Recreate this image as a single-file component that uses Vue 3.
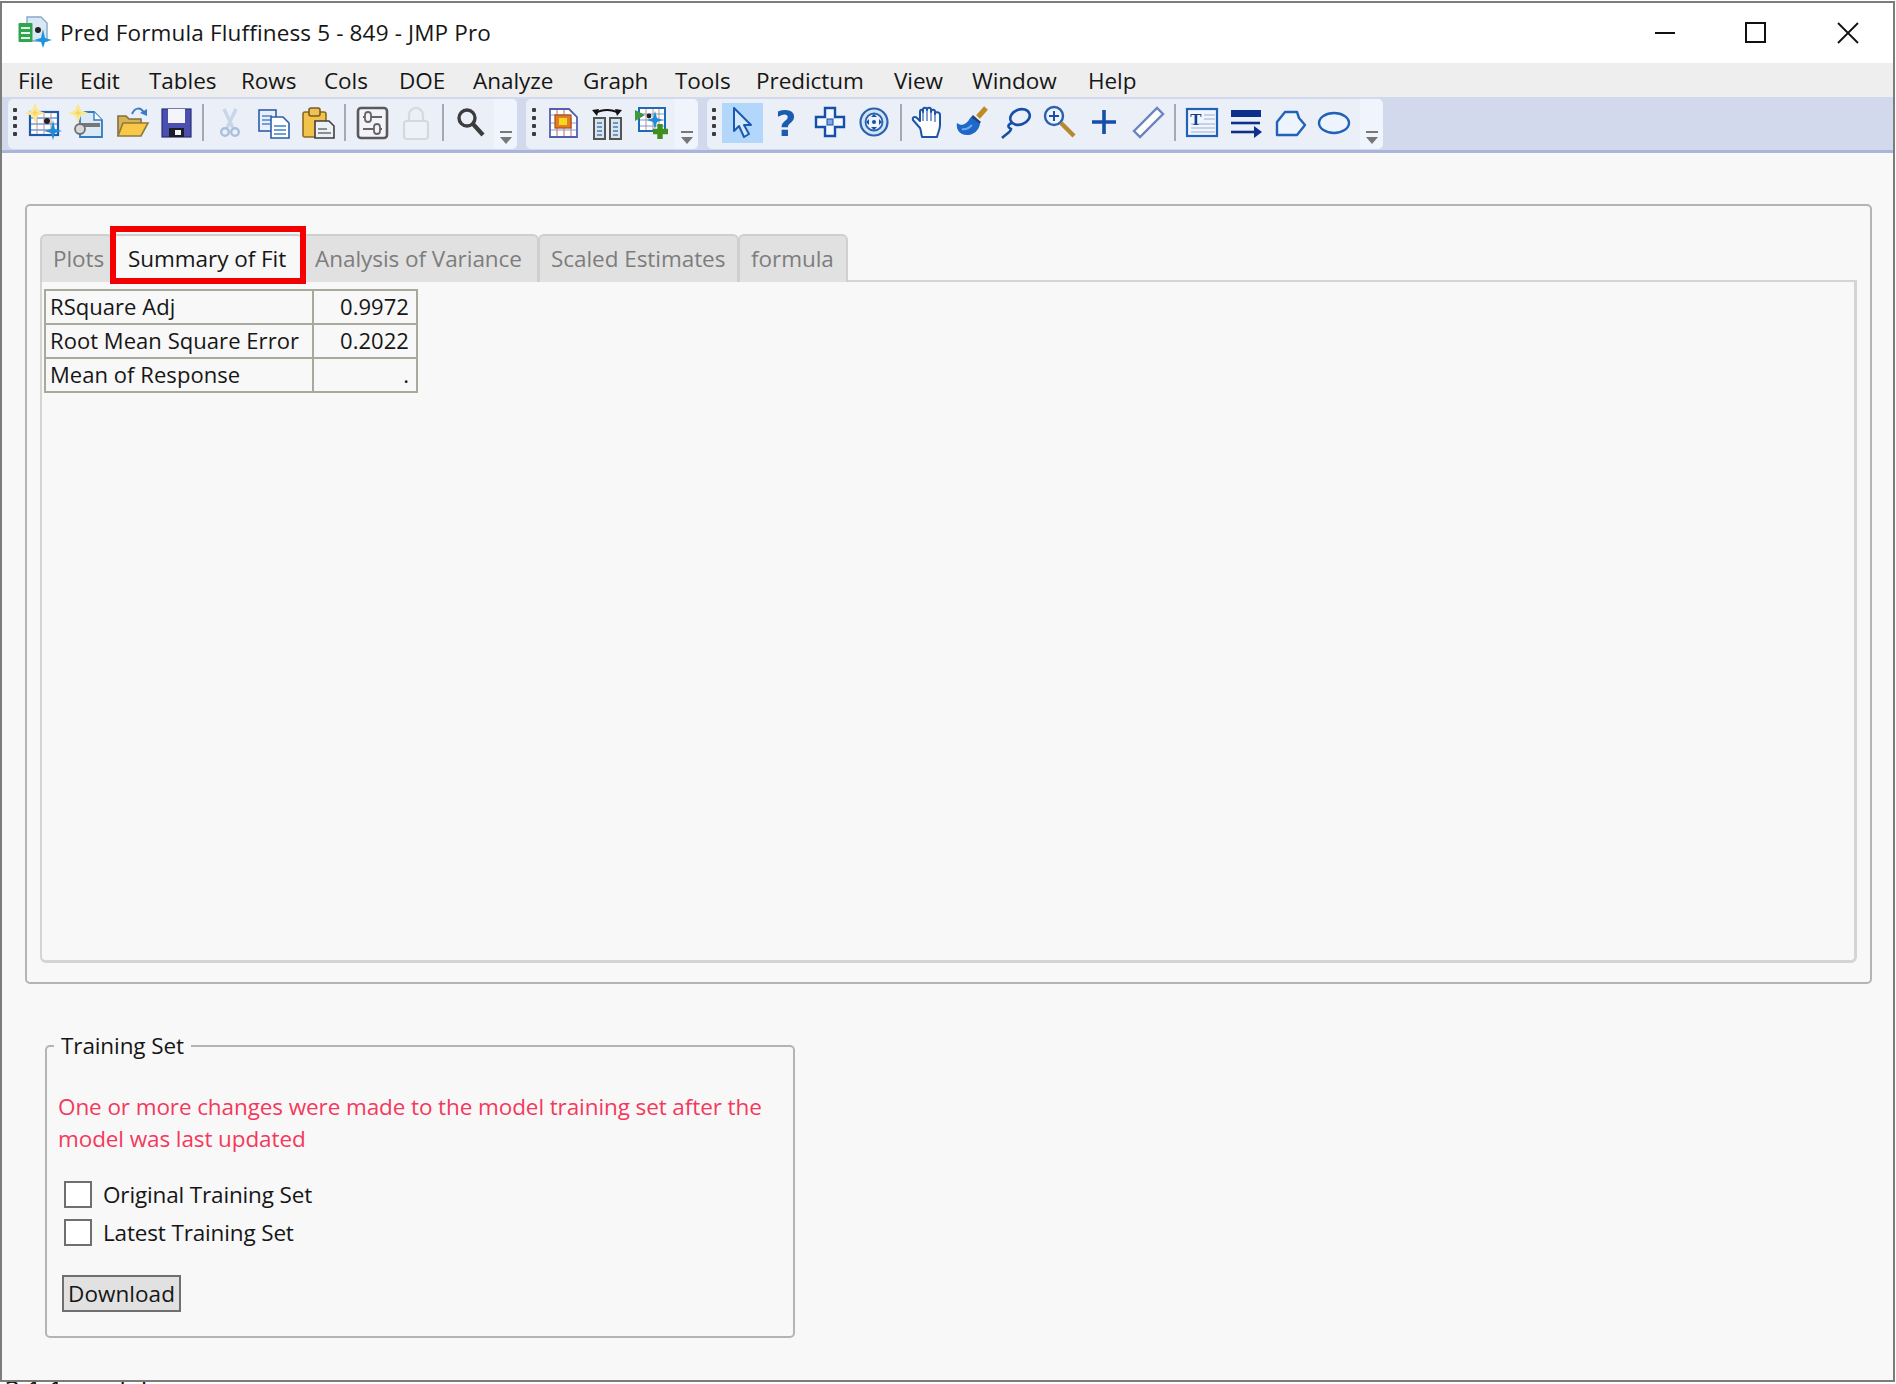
<script setup>
const menus = ['File', 'Edit', 'Tables', 'Rows', 'Cols', 'DOE', 'Analyze', 'Graph', 'Tools', 'Predictum', 'View', 'Window', 'Help']
const tabs = [
  { name: 'Plots', on: false },
  { name: 'Summary of Fit', on: true },
  { name: 'Analysis of Variance', on: false },
  { name: 'Scaled Estimates', on: false },
  { name: 'formula', on: false }
]
const rows = [
  ['RSquare Adj', '0.9972'],
  ['Root Mean Square Error', '0.2022'],
  ['Mean of Response', '.']
]
const sets = ['Original Training Set', 'Latest Training Set']
</script>

<template>
  <div class="page">
    <div class="window">
      <header class="titlebar">
        <svg class="appicon" width="34" height="32" viewBox="0 0 34 32">
          <path d="M9 1H23L29 7V25H9Z" fill="#dbe8f4" stroke="#86a9c8" stroke-width="1.4" />
          <rect x="0.5" y="7" width="14" height="19" rx="1" fill="#2fa54e" />
          <path d="M3 12H12M3 17H12M3 22H12" stroke="#e8f7ea" stroke-width="2" />
          <circle cx="20" cy="14" r="3" fill="#222" />
          <path d="M25 13L27 22L34 24L27 26L25 32L23 26L16 24L23 22Z" fill="#1e94dc" />
        </svg>
        <span class="title">Pred Formula Fluffiness 5 - 849 - JMP Pro</span>
        <div class="controls">
          <svg width="22" height="22" viewBox="0 0 22 22"><path d="M1 11H21" stroke="#111" stroke-width="2" /></svg>
          <svg width="22" height="22" viewBox="0 0 22 22"><rect x="2" y="1" width="19" height="19" fill="none" stroke="#111" stroke-width="2" /></svg>
          <svg class="close" width="22" height="22" viewBox="0 0 22 22"><path d="M1 1L21 21M21 1L1 21" stroke="#111" stroke-width="1.8" /></svg>
        </div>
      </header>

      <nav class="menubar">
        <span v-for="m in menus" :key="m" class="menu">{{ m }}</span>
      </nav>

      <div class="toolbar">
        <div class="group g1">
          <span class="grip"><i></i><i></i><i></i><i></i></span>
          <span class="tool"><svg viewBox="0 0 36 36">
            <rect x="4" y="8" width="28" height="23" fill="#fff" stroke="#1f5aa8" stroke-width="2.2" />
            <path d="M11 9V30M18 9V30M25 9V30" stroke="#e59a94" stroke-width="1.2" />
            <path d="M5 14H31M5 20H31M5 26H31" stroke="#6f9fdc" stroke-width="1.4" />
            <path d="M9 2L11 7L16 9L11 11L9 16L7 11L2 9L7 7Z" fill="#f6d75a" stroke="#f9e79a" stroke-width="2.4" />
            <circle cx="21" cy="17" r="3" fill="#222" />
            <path d="M27 16L29 25L36 27L29 29L27 36L25 29L18 27L25 25Z" fill="#1c8ed8" />
          </svg></span>
          <span class="tool"><svg viewBox="0 0 36 36">
            <path d="M10 8H24L32 16V33H10Z" fill="#dce9f7" stroke="#2f7cc4" stroke-width="1.8" />
            <path d="M24 8V16H32" fill="#fff" stroke="#2f7cc4" stroke-width="1.4" />
            <path d="M8 2L10 7L15 9L10 11L8 16L6 11L1 9L6 7Z" fill="#f6d75a" stroke="#f9e79a" stroke-width="2.4" />
            <rect x="9" y="19" width="21" height="4" fill="#777" />
            <circle cx="10" cy="25" r="5" fill="#d8d8d8" stroke="#6f6f6f" stroke-width="1.8" />
          </svg></span>
          <span class="tool"><svg viewBox="0 0 36 36">
            <path d="M4 32V12H12L15 15H27V22" fill="#d9b34f" stroke="#7d7144" stroke-width="1.6" />
            <path d="M4 32L9 19H34L27 32Z" fill="#f8c846" stroke="#8b7a42" stroke-width="1.6" />
            <path d="M18 10C21 3 27 3 30 9" fill="none" stroke="#3a7cc6" stroke-width="2" />
            <path d="M26 9L33 12V5Z" fill="#3a7cc6" />
          </svg></span>
          <span class="tool"><svg viewBox="0 0 36 36">
            <rect x="4" y="5" width="29" height="28" fill="#4a4fb0" stroke="#2c2f78" stroke-width="1.2" />
            <rect x="10" y="5" width="17" height="14" fill="#f4f5fb" />
            <rect x="11" y="24" width="15" height="9" fill="#1d1d28" />
            <rect x="17" y="26" width="6" height="5" fill="#f4f5fb" />
          </svg></span>
          <span class="sep"></span>
          <span class="tool"><svg viewBox="0 0 36 36">
            <path d="M12 5L21 24M24 5L15 24" stroke="#c8d6ea" stroke-width="3.4" />
            <circle cx="13" cy="28" r="3.8" fill="none" stroke="#a9bfdc" stroke-width="2.4" />
            <circle cx="23" cy="28" r="3.8" fill="none" stroke="#a9bfdc" stroke-width="2.4" />
          </svg></span>
          <span class="tool"><svg viewBox="0 0 36 36">
            <rect x="3" y="6" width="17" height="21" fill="#e6effa" stroke="#2d5ea8" stroke-width="1.6" />
            <path d="M6 12H16M6 16H16M6 20H14" stroke="#4d86cc" stroke-width="1.4" />
            <path d="M15 13H27L33 19V34H15Z" fill="#fff" stroke="#2d5ea8" stroke-width="1.6" />
            <path d="M18 22H30M18 26H30M18 30H30" stroke="#3b7fd0" stroke-width="1.5" />
          </svg></span>
          <span class="tool"><svg viewBox="0 0 36 36">
            <rect x="3" y="8" width="23" height="25" rx="2" fill="#f2c34a" stroke="#8a6a20" stroke-width="1.6" />
            <rect x="9" y="4" width="11" height="8" rx="2" fill="#ecc157" stroke="#7a5c20" stroke-width="1.6" />
            <path d="M15 17H29L34 22V34H15Z" fill="#edf1f7" stroke="#3f3f3f" stroke-width="1.6" />
            <path d="M18 25H27M18 29H31" stroke="#6d6d6d" stroke-width="1.6" />
          </svg></span>
          <span class="sep"></span>
          <span class="tool"><svg viewBox="0 0 36 36">
            <rect x="4" y="4" width="29" height="30" rx="3" fill="#f2f4f9" stroke="#5a5a5a" stroke-width="2.6" />
            <path d="M9 13H28M9 25H28" stroke="#666" stroke-width="2" />
            <rect x="11" y="8" width="6" height="10" rx="3" fill="#f2f4f9" stroke="#666" stroke-width="1.8" />
            <rect x="20" y="20" width="6" height="10" rx="3" fill="#f2f4f9" stroke="#666" stroke-width="1.8" />
          </svg></span>
          <span class="tool"><svg viewBox="0 0 36 36">
            <rect x="6" y="17" width="24" height="18" rx="3" fill="#eef1f7" stroke="#d5d8de" stroke-width="2.2" />
            <path d="M11 17V11A7 7 0 0 1 25 11V17" fill="none" stroke="#d5d8de" stroke-width="2.2" />
          </svg></span>
          <span class="sep"></span>
          <span class="tool"><svg viewBox="0 0 36 36">
            <circle cx="15" cy="14" r="8" fill="none" stroke="#3c3c3c" stroke-width="3.4" />
            <path d="M21 20L31 31" stroke="#3c3c3c" stroke-width="4.2" />
          </svg></span>
          <span class="drop"><svg width="14" height="14" viewBox="0 0 14 14"><path d="M1 1H13" stroke="#777" stroke-width="2" /><path d="M1 6H13L7 13Z" fill="#777" /></svg></span>
        </div>

        <div class="group g2">
          <span class="grip"><i></i><i></i><i></i><i></i></span>
          <span class="tool"><svg viewBox="0 0 36 36">
            <path d="M5 5H24L32 13V33H5Z" fill="#fff" stroke="#5060b0" stroke-width="1.8" />
            <path d="M12 6V32M19 6V32M26 14V32" stroke="#e07c74" stroke-width="1.2" />
            <path d="M6 11H24M6 19H31M6 26H31" stroke="#7a9ede" stroke-width="1.2" />
            <rect x="10" y="11" width="16" height="13" fill="#e08020" stroke="#b04a20" stroke-width="1.2" />
            <rect x="14" y="14" width="8" height="7" fill="#f8d820" />
          </svg></span>
          <span class="tool"><svg viewBox="0 0 36 36">
            <path d="M7 9C13 5 23 5 29 9" fill="none" stroke="#111" stroke-width="2" />
            <path d="M3 6L10 5L8 12ZM33 6L26 5L28 12Z" fill="#111" />
            <rect x="5" y="14" width="11" height="21" fill="#d7e4f2" stroke="#555" stroke-width="2" />
            <rect x="21" y="14" width="11" height="21" fill="#d7e4f2" stroke="#555" stroke-width="2" />
            <path d="M8 19H13M8 23H13M8 27H13M8 31H13M24 19H29M24 23H29M24 27H29M24 31H29" stroke="#6f94bd" stroke-width="2" />
          </svg></span>
          <span class="tool"><svg viewBox="0 0 36 36">
            <rect x="6" y="4" width="26" height="23" fill="#fff" stroke="#1f6ab8" stroke-width="2" />
            <path d="M13 5V26M20 5V26M26 5V26" stroke="#e59a94" stroke-width="1.2" />
            <path d="M7 10H31M7 16H31M7 22H31" stroke="#6f9fdc" stroke-width="1.2" />
            <path d="M2 6L12 11L2 17Z" fill="#3c9a3c" />
            <path d="M22 7L24 14L30 16L24 18L22 25L20 18L14 16L20 14Z" fill="#1c8ed8" />
            <circle cx="16" cy="12" r="2.4" fill="#222" />
            <path d="M27 20V35M20 27.5H35" stroke="#3f8f1f" stroke-width="5.4" />
          </svg></span>
          <span class="drop"><svg width="14" height="14" viewBox="0 0 14 14"><path d="M1 1H13" stroke="#777" stroke-width="2" /><path d="M1 6H13L7 13Z" fill="#777" /></svg></span>
        </div>

        <div class="group g3">
          <span class="grip"><i></i><i></i><i></i><i></i></span>
          <span class="tool active"><svg viewBox="0 0 36 36">
            <path d="M9 4V27L14 22L19 33L24 30L19 21L26 21Z" fill="#d6e8fb" stroke="#1a5ab0" stroke-width="2" stroke-linejoin="round" />
          </svg></span>
          <span class="tool"><svg viewBox="0 0 36 36">
            <text x="18" y="32" text-anchor="middle" class="qmark">?</text>
          </svg></span>
          <span class="tool"><svg viewBox="0 0 36 36">
            <path d="M13 4H23V13H32V23H23V32H13V23H4V13H13Z" fill="#f4f8ff" stroke="#154fa8" stroke-width="2.4" />
            <rect x="15" y="15" width="6" height="6" fill="#7eaae6" stroke="#154fa8" stroke-width="1" />
          </svg></span>
          <span class="tool"><svg viewBox="0 0 36 36">
            <circle cx="18" cy="18" r="13.5" fill="#d5e3f6" stroke="#2a62ae" stroke-width="2.2" />
            <circle cx="18" cy="18" r="8.5" fill="#eef4fc" stroke="#2a62ae" stroke-width="1.8" />
            <circle cx="18" cy="18" r="2" fill="#154fa8" />
            <path d="M18 10L21 13H15ZM18 26L21 23H15ZM10 18L13 15V21ZM26 18L23 15V21Z" fill="#154fa8" />
          </svg></span>
          <span class="sep"></span>
          <span class="tool"><svg viewBox="0 0 36 36">
            <path d="M10 24L3 16C2 13 5 12 7 14L10 17V8C10 5 13 5 13 8V6C13 3 17 3 17 6V6C17 3 21 3 21 6V8C21 5 25 5 25 8V10C25 7 30 8 30 11V21C30 26 28 28 27 33H12C11 29 11 26 10 24Z" fill="#fff" stroke="#1c54ac" stroke-width="2" stroke-linejoin="round" />
            <path d="M13 8V17M17 6V17M21 8V17M25 10V18" stroke="#1c54ac" stroke-width="1.1" />
          </svg></span>
          <span class="tool"><svg viewBox="0 0 36 36">
            <path d="M24 13L32 4" stroke="#c08a20" stroke-width="5" />
            <path d="M19 11L27 18L23 23L15 16Z" fill="#23407c" />
            <path d="M3 19C8 23 13 20 17 13L26 20C24 30 14 33 8 30C4 28 2 24 3 19Z" fill="#1e68c8" />
            <path d="M8 25C11 26 15 24 18 21" fill="none" stroke="#6fa8ee" stroke-width="2" />
          </svg></span>
          <span class="tool"><svg viewBox="0 0 36 36">
            <ellipse cx="22" cy="13" rx="10" ry="7.5" transform="rotate(-20 22 13)" fill="none" stroke="#154fa8" stroke-width="2.6" />
            <path d="M14 19C10 20 9 23 13 25C13 28 8 30 4 34" fill="none" stroke="#154fa8" stroke-width="2.6" />
          </svg></span>
          <span class="tool"><svg viewBox="0 0 36 36">
            <circle cx="12" cy="12" r="9" fill="#eef4ff" stroke="#2a62ae" stroke-width="2.4" />
            <path d="M7 12H17M12 7V17" stroke="#1c4fa0" stroke-width="2" />
            <path d="M19 19L32 32" stroke="#b88a30" stroke-width="4.4" />
          </svg></span>
          <span class="tool"><svg viewBox="0 0 36 36">
            <path d="M6 18H30M18 6V30" stroke="#154fa8" stroke-width="3.6" />
          </svg></span>
          <span class="tool"><svg viewBox="0 0 36 36">
            <path d="M4 27L27 4L33 10L10 33Z" fill="#fff" stroke="#6a84c0" stroke-width="2.4" />
          </svg></span>
          <span class="sep"></span>
          <span class="tool"><svg viewBox="0 0 36 36">
            <rect x="3" y="5" width="30" height="27" fill="#f2f6fc" stroke="#1f62b8" stroke-width="2.2" />
            <path d="M20 11H31M20 15H31M7 20H31M7 24H31M7 28H31" stroke="#c3d3ea" stroke-width="1.8" />
            <text x="12" y="21" text-anchor="middle" class="tmark">T</text>
          </svg></span>
          <span class="tool"><svg viewBox="0 0 36 36">
            <rect x="3" y="6" width="30" height="7" fill="#0f2f8c" />
            <path d="M3 19H32" stroke="#0f2f8c" stroke-width="2.6" />
            <path d="M3 28H28" stroke="#0f2f8c" stroke-width="2.6" />
            <path d="M26 22L34 28L26 34Z" fill="#0f2f8c" />
          </svg></span>
          <span class="tool"><svg viewBox="0 0 36 36">
            <path d="M5 18L13 8H25L27 14L33 21L25 31H5Z" fill="#eef4fd" stroke="#1f62b8" stroke-width="2.4" stroke-linejoin="round" />
          </svg></span>
          <span class="tool"><svg viewBox="0 0 36 36">
            <ellipse cx="18" cy="19" rx="15" ry="10" fill="#eef4fd" stroke="#1f62b8" stroke-width="2.4" />
          </svg></span>
          <span class="drop"><svg width="14" height="14" viewBox="0 0 14 14"><path d="M1 1H13" stroke="#777" stroke-width="2" /><path d="M1 6H13L7 13Z" fill="#777" /></svg></span>
        </div>
      </div>

      <main class="content">
        <section class="outer">
          <div class="tabs">
            <span v-for="t in tabs" :key="t.name" class="tab" :class="{ on: t.on }">{{ t.name }}</span>
            <span class="marker"></span>
          </div>
          <div class="panel">
            <table class="fit">
              <tbody>
                <tr v-for="r in rows" :key="r[0]">
                  <td class="name">{{ r[0] }}</td>
                  <td class="val">{{ r[1] }}</td>
                </tr>
              </tbody>
            </table>
          </div>
        </section>

        <fieldset class="training">
          <legend>Training Set</legend>
          <p class="warn">One or more changes were made to the model training set after the model was last updated</p>
          <div class="checks">
            <label v-for="s in sets" :key="s" class="check"><span class="box"></span>{{ s }}</label>
          </div>
          <button class="download" type="button">Download</button>
        </fieldset>
      </main>
    </div>
    <div class="behind">3.1.1 model</div>
  </div>
</template>

<style>
html, body { margin: 0; background: #fff; overflow: hidden; }
</style>

<style scoped>
.page {
  width: 1896px;
  height: 1384px;
  padding-top: 1px;
  box-sizing: border-box;
  overflow: hidden;
  font-family: "Open Sans", "Liberation Sans", sans-serif;
  font-size: 22.5px;
  letter-spacing: 0.05px;
  color: #161616;
}
.window {
  width: 1895px;
  height: 1381px;
  box-sizing: border-box;
  border: 2px solid #7c7c7c;
  display: flex;
  flex-direction: column;
  background: #f8f8f8;
}
.titlebar {
  height: 60px;
  flex: none;
  background: #fff;
  display: flex;
  align-items: center;
  padding-left: 16px;
}
.appicon { margin-top: -2px; }
.title { margin-left: 8px; margin-top: -2px; letter-spacing: 0.15px; }
.controls {
  margin-left: auto;
  display: flex;
  gap: 68px;
  padding-right: 34px;
}
.controls .close { margin-left: 3px; }
.menubar {
  height: 34px;
  flex: none;
  background: #eeeeee;
  display: grid;
  grid-template-columns: 62px 69px 92px 83px 75px 74px 110px 92px 81px 138px 78px 116px auto;
  align-items: center;
  padding-left: 16px;
  letter-spacing: -0.05px;
}
.toolbar {
  height: 56px;
  flex: none;
  box-sizing: border-box;
  background: #d3d9ec;
  border-bottom: 3px solid #a9b6da;
  display: flex;
  align-items: flex-start;
  padding: 2px 0 0 6px;
}
.group {
  height: 50px;
  box-sizing: border-box;
  background: #ebeff8;
  border-radius: 5px;
  display: flex;
  align-items: flex-start;
  padding-top: 5px;
  margin-right: 9px;
}
.g1 { width: 509px; }
.g2 { width: 172px; }
.g3 { width: 676px; }
.grip {
  flex: none;
  width: 14px;
  height: 32px;
  padding-top: 4px;
  box-sizing: border-box;
  display: flex;
  flex-direction: column;
  align-items: center;
  gap: 4px;
}
.g2 .grip { width: 15px; }
.g3 .grip { width: 13px; }
.grip i {
  width: 4px;
  height: 4px;
  background: #3c3c3c;
  border-radius: 1px;
}
.tool {
  flex: none;
  width: 44px;
  height: 36px;
  display: flex;
  justify-content: center;
}
.tool svg {
  width: 36px;
  height: 36px;
  overflow: visible;
  filter: blur(0.35px);
}
.tool.active {
  width: 41px;
  height: 40px;
  margin: -1px 1px 0 2px;
  background: #b3d7fb;
  padding-top: 1px;
  box-sizing: border-box;
}
.qmark {
  font-family: "DejaVu Sans", sans-serif;
  font-weight: 700;
  font-size: 36px;
  letter-spacing: 0;
  fill: #1c5cb0;
}
.tmark {
  font-family: "Liberation Serif", serif;
  font-weight: 700;
  font-size: 17px;
  fill: #123f92;
}
.sep {
  flex: none;
  width: 10px;
  height: 37px;
  background: linear-gradient(#a3a9b8, #a3a9b8) center / 2px 100% no-repeat;
}
.drop {
  flex: none;
  margin-left: auto;
  width: 23px;
  height: 50px;
  margin-top: -5px;
  padding-top: 32px;
  box-sizing: border-box;
  background: #f0f4fc;
  border-radius: 0 5px 5px 0;
  display: flex;
  justify-content: center;
}
.content { flex: 1; padding-left: 23px; }
.outer {
  width: 1847px;
  height: 780px;
  margin-top: 51px;
  box-sizing: border-box;
  border: 2px solid #b4b4b4;
  border-radius: 5px;
  padding: 28px 13px 0;
}
.tabs {
  display: grid;
  grid-template-columns: 72px 190px 236px 200px 109px;
  height: 46px;
  position: relative;
}
.tab {
  box-sizing: border-box;
  background: #e1e1e1;
  color: #7d7d7d;
  border: 2px solid #cfcfcf;
  border-bottom: none;
  border-radius: 6px 6px 0 0;
  margin-right: -1px;
  padding: 7px 0 0 11px;
  line-height: 32px;
  white-space: nowrap;
  letter-spacing: -0.05px;
}
.tab.on {
  background: #f8f8f8;
  color: #161616;
  padding-left: 14px;
  height: 48px;
  position: relative;
}
.marker {
  position: absolute;
  left: 70px;
  top: -8px;
  width: 196px;
  height: 58px;
  box-sizing: border-box;
  border: 6px solid #f50000;
}
.panel {
  height: 683px;
  box-sizing: border-box;
  border: 2px solid #d4d4d4;
  border-width: 2px 3px 3px 2px;
  border-radius: 0 0 6px 6px;
  padding: 7px 0 0 2px;
}
.fit {
  border-collapse: collapse;
  border: 2px solid #a9a99b;
  width: 374px;
  table-layout: fixed;
  font-size: 22px;
}
.fit td {
  border: 2px solid #a9a99b;
  height: 34px;
  padding: 0 7px 2px 4px;
  line-height: 30px;
  white-space: nowrap;
  box-sizing: border-box;
}
.fit .name { width: 268px; }
.fit .val { text-align: right; }
.training {
  width: 750px;
  height: 307px;
  box-sizing: border-box;
  margin: 47px 0 0 20px;
  padding: 0 0 0 11px;
  border: 2px solid #b4b4b4;
  border-radius: 5px;
  min-inline-size: 0;
}
.training legend {
  margin-left: -4px;
  padding: 0 7px;
  line-height: 30px;
  letter-spacing: -0.1px;
}
.warn {
  margin: 30px 0 0;
  width: 725px;
  line-height: 32px;
  color: #f5385c;
  letter-spacing: -0.1px;
}
.checks {
  margin-top: 26px;
  display: flex;
  flex-direction: column;
  gap: 11px;
}
.check {
  display: flex;
  align-items: center;
  height: 27px;
  padding-left: 6px;
  white-space: nowrap;
  letter-spacing: -0.15px;
}
.box {
  width: 28px;
  height: 27px;
  box-sizing: border-box;
  border: 2px solid #6f6f6f;
  background: #fff;
  margin-right: 11px;
}
.download {
  display: block;
  width: 119px;
  height: 37px;
  margin: 29px 0 0 4px;
  padding: 0;
  border: 2px solid #6f6f6f;
  background: #e1e1e1;
  font: inherit;
  letter-spacing: inherit;
  color: inherit;
}
.behind {
  height: 2px;
  overflow: hidden;
  padding-left: 5px;
  line-height: 15px;
  font-size: 26px;
  color: #111;
}
</style>
